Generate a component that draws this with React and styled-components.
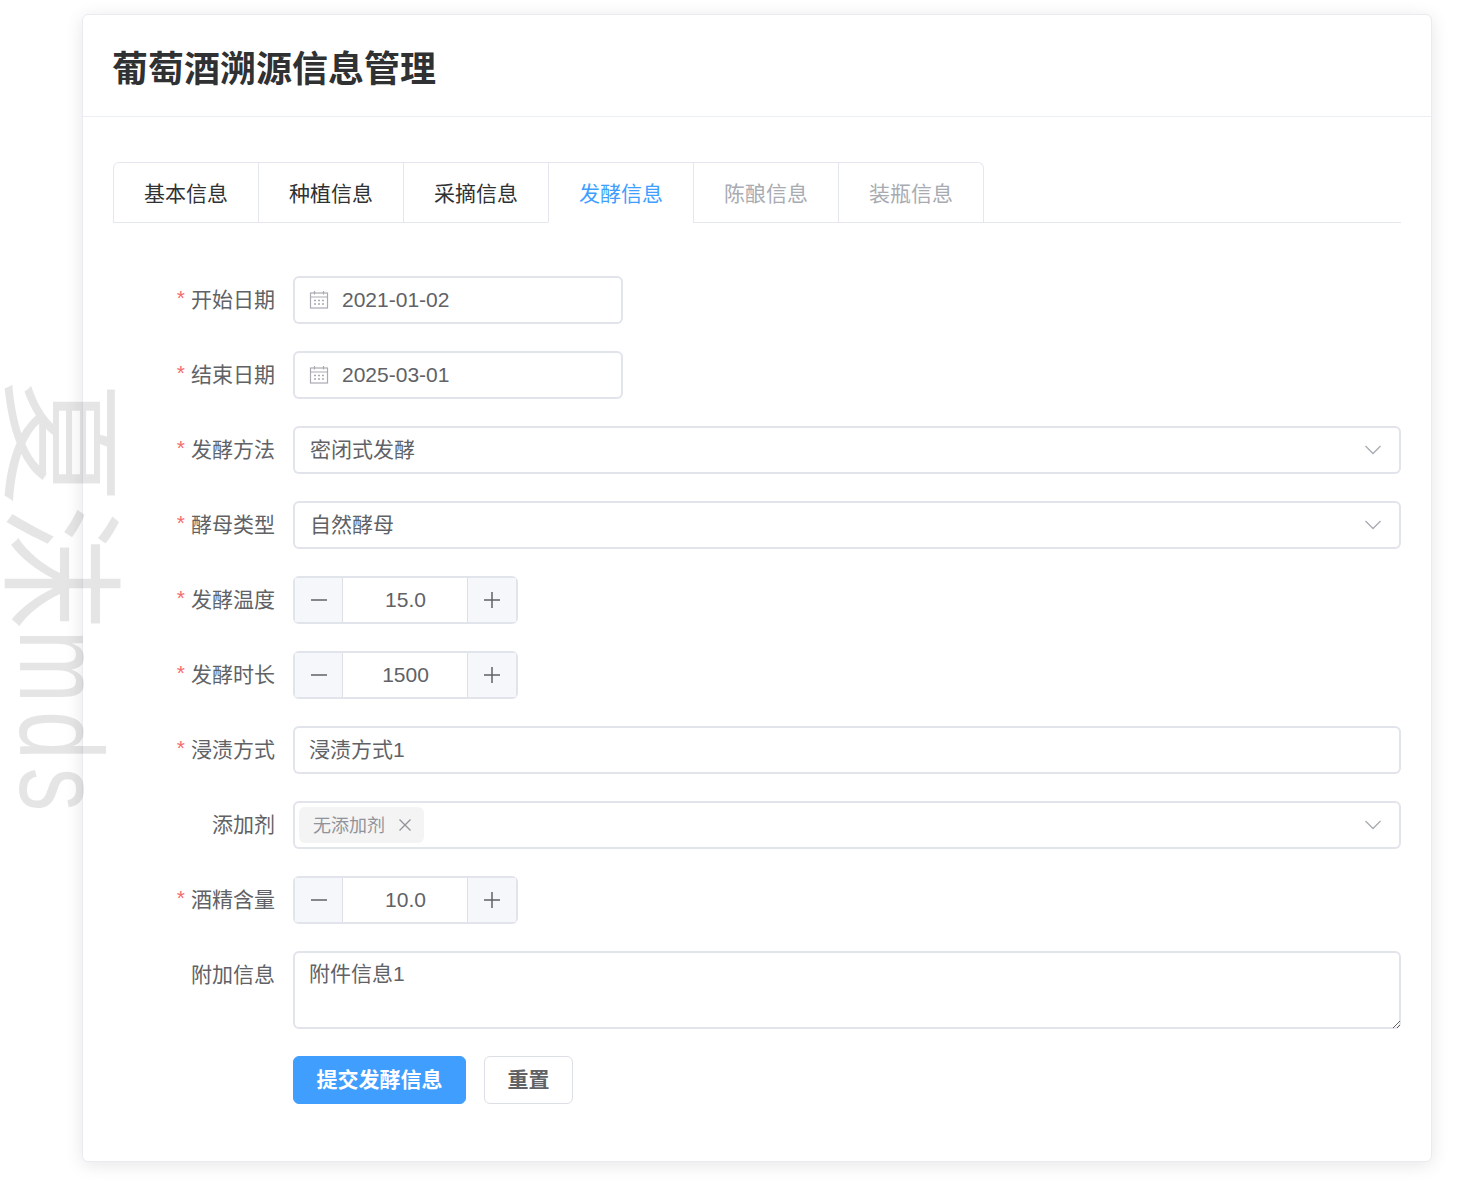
import React from 'react'
import styled, { createGlobalStyle } from 'styled-components'

const GlobalStyle = createGlobalStyle`
  html, body {
    margin: 0;
    padding: 0;
    background: #fff;
  }
  body {
    font-family: "Liberation Sans", Arial, "Noto Sans CJK SC", sans-serif;
    color: #606266;
  }
`

const Page = styled.div`
  position: relative;
  height: 1198px;
  box-sizing: border-box;
  padding: 14px 51px 0 82px;
  overflow: hidden;
`

const Watermark = styled.div`
  position: absolute;
  left: 118px;
  top: 380px;
  transform-origin: 0 0;
  transform: rotate(90deg);
  font-size: 125px;
  line-height: 120px;
  white-space: nowrap;
  color: rgba(0, 0, 0, 0.1);
  pointer-events: none;
  z-index: 5;
`

const WatermarkLatin = styled.span`
  display: inline-block;
  font-size: 118px;
  letter-spacing: 11px;
  transform-origin: 0 50%;
  transform: translateY(-5px) scaleX(0.74);
`

const Card = styled.div`
  box-sizing: border-box;
  height: 1148px;
  background: #fff;
  border: 1px solid #e9ebf0;
  border-radius: 6px;
  box-shadow: 0 3px 18px rgba(0, 0, 0, 0.1);
`

const CardHeader = styled.div`
  box-sizing: border-box;
  height: 102px;
  padding: 0 30px 0 29px;
  display: flex;
  align-items: center;
  border-bottom: 1px solid #ebeef5;
`

const Title = styled.h2`
  margin: 0;
  font-size: 36px;
  font-weight: 700;
  color: #303133;
`

const CardBody = styled.div`
  padding: 45px 30px 30px;
`

const TabBar = styled.div`
  display: flex;
  height: 61px;
  box-sizing: border-box;
  border-bottom: 1px solid #e4e7ed;
  margin-bottom: 53px;
`

const TabList = styled.div`
  display: flex;
  height: 61px;
  box-sizing: border-box;
  border: 1px solid #e4e7ed;
  border-bottom: none;
  border-radius: 6px 6px 0 0;
`

const Tab = styled.div`
  box-sizing: border-box;
  width: ${p => (p.$first ? 144 : 145)}px;
  height: 60px;
  line-height: 62px;
  text-align: center;
  font-size: 21px;
  color: ${p => (p.$active ? '#409eff' : p.$disabled ? '#a8abb2' : '#303133')};
  border-left: ${p => (p.$first ? 'none' : '1px solid #e4e7ed')};
  border-bottom: 1px solid ${p => (p.$active ? '#fff' : '#e4e7ed')};
`

const Form = styled.div`
  display: flex;
  flex-direction: column;
  gap: 27px;
`

const Row = styled.div`
  display: flex;
  align-items: flex-start;
`

const Label = styled.label`
  box-sizing: border-box;
  width: 180px;
  flex: none;
  height: 48px;
  padding: 0 18px 4px 0;
  display: flex;
  justify-content: flex-end;
  align-items: center;
  font-size: 21px;
  color: #606266;
`

const Star = styled.span`
  color: #f56c6c;
  margin-right: 6px;
`

const Field = styled.div`
  box-sizing: border-box;
  height: 48px;
  width: ${p => p.$width || '100%'};
  flex: ${p => (p.$width ? 'none' : '1')};
  display: flex;
  align-items: center;
  background: #fff;
  border-radius: 6px;
  box-shadow: 0 0 0 2px #e2e4eb inset;
  padding: 0 16px;
  font-size: 21px;
  color: #606266;
`

const TextInput = styled.input`
  flex: 1;
  min-width: 0;
  border: none;
  outline: none;
  padding: 0 0 ${p => (p.$cjk ? 4 : 0)}px;
  margin-left: ${p => p.$indent || 0}px;
  background: transparent;
  font: inherit;
  color: inherit;
`

const IconSlot = styled.span`
  display: flex;
  flex: none;
  margin-right: ${p => p.$gap || 0}px;
`

const TagWrap = styled.div`
  flex: 1;
  margin-left: -10px;
`

const Tag = styled.span`
  display: inline-flex;
  align-items: center;
  height: 36px;
  box-sizing: border-box;
  padding: 0 12px 0 14px;
  gap: 13px;
  background: #f4f4f5;
  border-radius: 6px;
  font-size: 18px;
  color: #909399;
`

const TagText = styled.span`
  padding-bottom: 3px;
`

const Stepper = styled.div`
  box-sizing: border-box;
  width: 225px;
  height: 48px;
  display: flex;
  border-radius: 6px;
  box-shadow: 0 0 0 2px #e2e4eb inset;
  overflow: hidden;
`

const StepButton = styled.div`
  flex: none;
  box-sizing: border-box;
  display: flex;
  align-items: center;
  justify-content: center;
  background: #f5f7fa;
  margin: 2px 0;
  ${p => (p.$side === 'left'
    ? 'width: 48px; margin-left: 2px; border-right: 1px solid #dcdfe6;'
    : 'width: 49px; margin-right: 2px; border-left: 1px solid #dcdfe6;')}
`

const StepValue = styled.input`
  flex: 1;
  min-width: 0;
  border: none;
  outline: none;
  padding: 0 0 0 1px;
  background: transparent;
  text-align: center;
  font: inherit;
  font-size: 21px;
  color: #606266;
`

const TextArea = styled.textarea`
  flex: 1;
  display: block;
  box-sizing: border-box;
  height: 78px;
  padding: 7px 16px;
  border: none;
  outline: none;
  border-radius: 6px;
  box-shadow: 0 0 0 2px #e2e4eb inset;
  font: inherit;
  font-size: 21px;
  line-height: 31.5px;
  color: #606266;
  resize: vertical;
`

const Actions = styled.div`
  display: flex;
  gap: 18px;
  margin-left: 180px;
`

const Button = styled.button`
  box-sizing: border-box;
  height: 48px;
  padding: 0 22.5px 4px;
  border-radius: 6px;
  border: 1px solid ${p => (p.$primary ? '#409eff' : '#dcdfe6')};
  background: ${p => (p.$primary ? '#409eff' : '#fff')};
  color: ${p => (p.$primary ? '#fff' : '#606266')};
  font: inherit;
  font-size: 21px;
  font-weight: 700;
`

const CalendarIcon = () => (
  <svg width="20" height="20" viewBox="0 0 20 20" fill="none" stroke="#a8abb2" strokeWidth="1.2">
    <rect x="1.5" y="3" width="17" height="15" />
    <path d="M1.5 7h17M5.5 1v3.5M14.5 1v3.5" />
    <path d="M5 10.5h10M5 14h10" strokeWidth="1.4" strokeDasharray="2 2" />
  </svg>
)

const ChevronIcon = () => (
  <svg width="16" height="16" viewBox="0 0 16 16" fill="none" stroke="#a8abb2" strokeWidth="1.3">
    <path d="M0.5 4l7.5 7.5L15.5 4" />
  </svg>
)

const MinusIcon = () => (
  <svg width="18" height="18" viewBox="0 0 18 18" stroke="#606266" strokeWidth="1.5">
    <path d="M1 9h16" />
  </svg>
)

const PlusIcon = () => (
  <svg width="18" height="18" viewBox="0 0 18 18" stroke="#606266" strokeWidth="1.5">
    <path d="M1 9h16M9 1v16" />
  </svg>
)

const CloseIcon = () => (
  <svg width="14" height="14" viewBox="0 0 14 14" stroke="#909399" strokeWidth="1.3">
    <path d="M1.5 1.5l11 11M12.5 1.5l-11 11" />
  </svg>
)

const tabs = [
  { name: '基本信息' },
  { name: '种植信息' },
  { name: '采摘信息' },
  { name: '发酵信息', active: true },
  { name: '陈酿信息', disabled: true },
  { name: '装瓶信息', disabled: true },
]

const FormRow = ({ label, required = true, children }) => (
  <Row>
    <Label>
      {required && <Star>*</Star>}
      {label}
    </Label>
    {children}
  </Row>
)

const DateField = ({ value }) => (
  <Field $width="330px">
    <IconSlot $gap={13}><CalendarIcon /></IconSlot>
    <TextInput readOnly value={value} />
  </Field>
)

const Chevron = () => (
  <IconSlot $gap={4}><ChevronIcon /></IconSlot>
)

const SelectField = ({ value }) => (
  <Field>
    <TextInput $cjk $indent={1} readOnly value={value} />
    <Chevron />
  </Field>
)

const NumberField = ({ value }) => (
  <Stepper>
    <StepButton $side="left"><MinusIcon /></StepButton>
    <StepValue readOnly value={value} />
    <StepButton $side="right"><PlusIcon /></StepButton>
  </Stepper>
)

export default function App() {
  return (
    <Page>
      <GlobalStyle />
      <Watermark>夏沫<WatermarkLatin>mds</WatermarkLatin></Watermark>
      <Card>
        <CardHeader>
          <Title>葡萄酒溯源信息管理</Title>
        </CardHeader>
        <CardBody>
          <TabBar>
            <TabList>
              {tabs.map((t, i) => (
                <Tab key={t.name} $first={i === 0} $active={t.active} $disabled={t.disabled}>{t.name}</Tab>
              ))}
            </TabList>
          </TabBar>
          <Form>
            <FormRow label="开始日期"><DateField value="2021-01-02" /></FormRow>
            <FormRow label="结束日期"><DateField value="2025-03-01" /></FormRow>
            <FormRow label="发酵方法"><SelectField value="密闭式发酵" /></FormRow>
            <FormRow label="酵母类型"><SelectField value="自然酵母" /></FormRow>
            <FormRow label="发酵温度"><NumberField value="15.0" /></FormRow>
            <FormRow label="发酵时长"><NumberField value="1500" /></FormRow>
            <FormRow label="浸渍方式">
              <Field><TextInput $cjk readOnly value="浸渍方式1" /></Field>
            </FormRow>
            <FormRow label="添加剂" required={false}>
              <Field>
                <TagWrap>
                  <Tag><TagText>无添加剂</TagText><CloseIcon /></Tag>
                </TagWrap>
                <Chevron />
              </Field>
            </FormRow>
            <FormRow label="酒精含量"><NumberField value="10.0" /></FormRow>
            <FormRow label="附加信息" required={false}>
              <TextArea readOnly value="附件信息1" />
            </FormRow>
            <Actions>
              <Button $primary>提交发酵信息</Button>
              <Button>重置</Button>
            </Actions>
          </Form>
        </CardBody>
      </Card>
    </Page>
  )
}
